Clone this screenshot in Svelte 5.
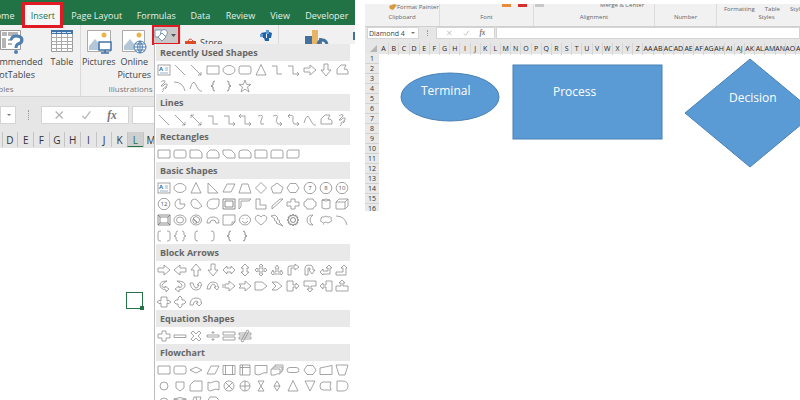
<script lang="ts">
  type Section = { title: string; shapes: string[] };

  const tabs = ["Home", "Insert", "Page Layout", "Formulas", "Data", "Review", "View", "Developer"];
  const letters = "ABCDEFGHIJKLMNOPQRSTUVWXYZ".split("");

  // Left sheet is scrolled to column C, right sheet runs A..Z, AA..AP
  const leftColumns = letters.slice(2);
  const rightColumns = [...letters, ...letters.slice(0, 16).map((l) => "A" + l)];
  const rows = Array.from({ length: 16 }, (_, i) => i + 1);

  // Outlines on a 16x16 box.
  const outlines: Record<string, string> = {
    line: "M3 3L13 13",
    arrow: "M3 3L13 13M13 10V13H10",
    "double arrow": "M3 3L13 13M13 10V13H10M3 6V3H6",
    rectangle: "M2 4H14V12H2Z",
    oval: "M2 8A6 4.5 0 0 1 14 8A6 4.5 0 0 1 2 8Z",
    "rounded rectangle": "M4 4H12Q14 4 14 6V10Q14 12 12 12H4Q2 12 2 10V6Q2 4 4 4Z",
    triangle: "M8 2.5L13 13H3Z",
    elbow: "M3 4H8V12H13",
    "elbow arrow": "M3 4H8V12H14M12 10L14 12L12 14",
    "elbow double arrow": "M2 4H8V12H14M12 10L14 12L12 14M4 2L2 4L4 6",
    "right arrow": "M2 6H8V3L14 8L8 13V10H2Z",
    "left arrow": "M14 6H8V3L2 8L8 13V10H14Z",
    "up arrow": "M6 14V8H3L8 2L13 8H10V14Z",
    "down arrow": "M6 2V8H3L8 14L13 8H10V2Z",
    freeform: "M3 7L7 3H12L10 7Q14 7 14 9V12H3Z",
    scribble: "M5 4Q9 1 9 4L5 8Q7 9 9 6Q12 5 11 8L7 11Q8 13 6 14M9 11L11 9",
    arc: "M2 4Q11 4 13 13",
    curve: "M2 11Q5 0 8 7T14 13",
    "left brace": "M10 3Q8 3 8 5V7L6 8L8 9V11Q8 13 10 13",
    "right brace": "M6 3Q8 3 8 5V7L10 8L8 9V11Q8 13 6 13",
    star: "M8 2L9.6 6.4H14L10.5 9L12 14L8 11L4 14L5.5 9L2 6.4H6.4Z",
    "curved connector": "M5 4Q11 2 9 6T8 12H11",
    "curved arrow": "M4 4Q10 2 8 6T9 12H13M11 10L13 12L11 14",
    "curved double arrow": "M3 4Q9 2 8 6T9 12H14M12 10L14 12L12 14M5 2L3 4L5 6",
    "snip corner": "M2 4H11L14 7V12H2Z",
    "snip same side": "M5 4H11L14 7V12H2V7Z",
    "snip diagonal": "M2 4H10L14 8V12H6L2 8Z",
    "snip and round": "M5 4H11L14 7V12H2V7Q2 4 5 4Z",
    "round corner": "M2 4H12Q14 4 14 6V12H2Z",
    "round same side": "M4 4H12Q14 4 14 6V12H2V6Q2 4 4 4Z",
    "round diagonal": "M4 4H14V10Q14 12 12 12H2V6Q2 4 4 4Z",
    "right triangle": "M3 3V13H13Z",
    parallelogram: "M6 4H14L10 12H2Z",
    trapezoid: "M5 4H11L14 13H2Z",
    diamond: "M8 2.5L13.5 8L8 13.5L2.5 8Z",
    pentagon: "M8 3L14 7.5L12 13H4L2 7.5Z",
    hexagon: "M5 3.5H11L14 8L11 12.5H5L2 8Z",
    pie: "M8 8V3A5 5 0 1 0 13 8Z",
    chord: "M4 4Q7 2 9 4L14 10Q11 14 6 12Q1 8 4 4Z",
    teardrop: "M14 3V8Q13 13 8 13Q2 13 2 8Q3 3 8 3Z",
    frame: "M2 3H14V13H2ZM4 5H12V11H4Z",
    "half frame": "M2 3H14L12 5H4V11L2 13Z",
    "l shape": "M3 3H7V9H13V13H3Z",
    "diagonal stripe": "M3 10L11 3H14L3 13Z",
    plus: "M6 3H10V6H14V10H10V13H6V10H2V6H6Z",
    plaque: "M5 3H11Q11 5 14 6V10Q11 11 11 13H5Q5 11 2 10V6Q5 5 5 3Z",
    can: "M4 4Q8 2 12 4V12Q8 14 4 12ZM4 4Q8 6 12 4",
    cube: "M2 6L5 3H14V10L11 13H2ZM2 6H11V13M11 6L14 3",
    bevel: "M2 3H14V13H2ZM4 5H12V11H4ZM2 3L4 5M14 3L12 5M2 13L4 11M14 13L12 11",
    donut: "M2 8A6 5 0 0 1 14 8A6 5 0 0 1 2 8ZM4.5 8A3.5 3 0 0 1 11.5 8A3.5 3 0 0 1 4.5 8Z",
    "no symbol": "M2.5 8A5.5 5 0 0 1 13.5 8A5.5 5 0 0 1 2.5 8ZM5 6L10 11Q13 8 11 6Q8 3 5 6ZM5 7L9 11Q6 12 5 10Z",
    "block arc": "M2 11Q2 5 8 5T14 11H11Q11 8 8 8T5 11Z",
    "folded corner": "M2 3H14V10L11 13H2ZM11 13V10H14",
    smiley: "M2.5 8A5.5 5 0 0 1 13.5 8A5.5 5 0 0 1 2.5 8ZM5 9Q8 13 11 9M6 6V7M10 6V7",
    heart: "M8 13Q1 8 2.5 5Q5 1.5 8 5Q11 1.5 13.5 5Q15 8 8 13Z",
    lightning: "M2 4L6 3L9 6L8 7L11 9L10 10L14 14L7 11L8 10L5 8L6 7Z",
    sun: "M5 5L5 3L7 4L8 2L9 4L11 3L11 5L13 5L12 7L14 8L12 9L13 11L11 11L11 13L9 12L8 14L7 12L5 13L5 11L3 11L4 9L2 8L4 7L3 5ZM8 5.5A2.5 2.5 0 1 0 8 10.5A2.5 2.5 0 1 0 8 5.5",
    moon: "M11 3Q5 3 5 8T11 13Q8 11 8 8T11 3Z",
    cloud: "M4 10Q1 9 3 7Q3 4 6 5Q8 3 10 5Q14 4 13 7Q15 9 12 10Q10 12 8 10Q5 12 4 10ZM6 12H5",
    "double bracket": "M5 3H4Q2 3 2 5V11Q2 13 4 13H5M11 3H12Q14 3 14 5V11Q14 13 12 13H11",
    "double brace": "M6 3Q4 3 4 5V7L2 8L4 9V11Q4 13 6 13M10 3Q12 3 12 5V7L14 8L12 9V11Q12 13 10 13",
    "left bracket": "M10 3Q7 3 7 5V11Q7 13 10 13",
    "right bracket": "M6 3Q9 3 9 5V11Q9 13 6 13",
    "left-right arrow": "M2 8L6 4V6H10V4L14 8L10 12V10H6V12Z",
    "up-down arrow": "M8 2L12 6H10V10H12L8 14L4 10H6V6H4Z",
    "quad arrow": "M8 2L10 4H9V7H12V6L14 8L12 10V9H9V12H10L8 14L6 12H7V9H4V10L2 8L4 6V7H7V4H6Z",
    "three-way arrow": "M8 3L10 6H9V10H12V8L14 11L12 13V12H4V13L2 11L4 8V10H7V6H6Z",
    "bent arrow": "M3 13V6Q3 4 5 4H10V2L14 5L10 8V6H6V13Z",
    "u-turn arrow": "M3 13V6Q3 3 7 3Q11 3 11 6V8H13L10 12L7 8H8V6H6V13Z",
    "left-up arrow": "M2 10L5 7V9H10V6H8L11 3L14 6H12V12H5V13Z",
    "bent-up arrow": "M2 10H9V6H7L10 3L13 6H12V13H2Z",
    "curved right": "M11 3Q4 3 4 7T10 12V14L13 11L9 8V10Q5 9 6 7T11 3Z",
    "curved left": "M5 3Q13 3 13 7T7 12V14L3 11L7 8V10Q11 9 10 7T5 3Z",
    "curved up": "M2 5Q3 12 8 12T13 7H14L12 4L9 7H11Q10 10 8 10T5 5Z",
    "curved down": "M2 11Q3 4 8 4T13 9H14L12 12L9 9H11Q10 6 8 6T5 11Z",
    "striped arrow": "M2 6V10M4 6H8V3L14 8L8 13V10H4Z",
    "notched arrow": "M2 6H8V3L14 8L8 13V10H2L4 8Z",
    "pentagon arrow": "M2 4H9L14 8L9 12H2Z",
    chevron: "M3 4H8L13 8L8 12H3L7 8Z",
    "right callout": "M2 3H8V7H11V5L14 8L11 11V9H8V13H2Z",
    "down callout": "M2 3H14V8H9V11H11L8 14L5 11H7V8H2Z",
    "left callout": "M14 3H8V7H5V5L2 8L5 11V9H8V13H14Z",
    "up callout": "M2 13H14V8H9V5H11L8 2L5 5H7V8H2Z",
    "left-right callout": "M5 3H11V7H12V6L15 8L12 10V9H11V13H5V9H4V10L1 8L4 6V7H5Z",
    "quad callout": "M8 2L10 4V6H12L14 8L12 10H10V12L8 14L6 12V10H4L2 8L4 6H6V4Z",
    "circular arrow": "M2 11Q2 4 8 4T13 9H14L11 12L8 9H10Q10 7 8 7T5 11Z",
    minus: "M2 7H14V9.5H2Z",
    multiply: "M5 3L8 6L11 3L13 5L10 8L13 11L11 13L8 10L5 13L3 11L6 8L3 5Z",
    divide: "M2 7H14V9H2ZM7 4H9V5H7ZM7 11H9V12H7Z",
    equal: "M2 4H14V7H2ZM2 9H14V12H2Z",
    "not equal": "M2 5H14V7H2ZM2 9H14V11H2ZM10 2L12 3L6 14L4 13Z",
    "flat diamond": "M8 5L14 8L8 11L2 8Z",
    predefined: "M2 3.5H14V12.5H2ZM4.5 3.5V12.5M11.5 3.5V12.5",
    "internal storage": "M3 3H13V13H3ZM3 5.5H13M5.5 3V13",
    document: "M2 3.5H14V11Q11 10 8 12T2 12Z",
    multidocument: "M2 7H11V12Q8 11 6 13H2ZM4 7V5H13V10H11M6 5V3H14V8H13",
    terminator: "M5 5.5H11Q14 5.5 14 8T11 10.5H5Q2 10.5 2 8T5 5.5Z",
    "manual input": "M2 6L14 3.5V12.5H2Z",
    "manual operation": "M2 3H14L11 13H5Z",
    connector: "M8 4A4 4 0 1 0 8 12A4 4 0 1 0 8 4Z",
    "off-page": "M4 4H12V10L8 13L4 10Z",
    card: "M2 7L6 3H14V13H2Z",
    tape: "M3 4Q5 6 8 4T14 4V12Q11 10 8 12T3 12Z",
    "summing junction": "M8 3A5 5 0 1 0 8 13A5 5 0 1 0 8 3M4.5 4.5L11.5 11.5M11.5 4.5L4.5 11.5",
    or: "M8 3A5 5 0 1 0 8 13A5 5 0 1 0 8 3M8 3V13M3 8H13",
    collate: "M5 3H11L5 13H11Z",
    sort: "M8 3L11 8L8 13L5 8ZM5 8H11",
    merge: "M3 3H13L8 13Z",
    "stored data": "M5 4H13Q11 8 13 12H5Q2 12 2 8T5 4Z",
    delay: "M3 3H8Q14 3 14 8T8 13H3Z",
    disk: "M2 5Q8 2 14 5V11Q8 14 2 11ZM2 5Q8 8 14 5",
    "direct access": "M6 3H13L10 13H3ZM8 3L10 13",
    display: "M2 8L5 3H11Q14 5 14 8T11 13H5Z",
  };

  // Heavier grey for the solid-looking glyphs.
  const dark = ["left brace", "right brace", "frame", "bevel", "sun"];
  const numbered: Record<string, string> = { heptagon: "7", octagon: "8", decagon: "10", dodecagon: "12" };

  const sections: Section[] = [
    {
      title: "Recently Used Shapes",
      shapes: [
        "text box", "line", "arrow", "rectangle", "oval", "rounded rectangle", "triangle", "elbow", "elbow arrow", "right arrow", "down arrow", "freeform",
        "scribble", "arc", "curve", "left brace", "right brace", "star",
      ],
    },
    {
      title: "Lines",
      shapes: ["line", "arrow", "double arrow", "elbow", "elbow arrow", "elbow double arrow", "curved connector", "curved arrow", "curved double arrow", "curve", "freeform", "scribble"],
    },
    {
      title: "Rectangles",
      shapes: ["rectangle", "rounded rectangle", "snip corner", "snip same side", "snip diagonal", "snip and round", "round corner", "round same side", "round diagonal"],
    },
    {
      title: "Basic Shapes",
      shapes: [
        "text box", "oval", "triangle", "right triangle", "parallelogram", "trapezoid", "diamond", "pentagon", "hexagon", "heptagon", "octagon", "decagon",
        "dodecagon", "pie", "chord", "teardrop", "frame", "half frame", "l shape", "diagonal stripe", "plus", "plaque", "can", "cube",
        "bevel", "donut", "no symbol", "block arc", "folded corner", "smiley", "heart", "lightning", "sun", "moon", "cloud", "arc",
        "double bracket", "double brace", "left bracket", "right bracket", "left brace", "right brace",
      ],
    },
    {
      title: "Block Arrows",
      shapes: [
        "right arrow", "left arrow", "up arrow", "down arrow", "left-right arrow", "up-down arrow", "quad arrow", "three-way arrow", "bent arrow", "u-turn arrow", "left-up arrow", "bent-up arrow",
        "curved right", "curved left", "curved up", "curved down", "striped arrow", "notched arrow", "pentagon arrow", "chevron", "right callout", "down callout", "left callout", "up callout",
        "left-right callout", "quad callout", "circular arrow",
      ],
    },
    { title: "Equation Shapes", shapes: ["plus", "minus", "multiply", "divide", "equal", "not equal"] },
    {
      title: "Flowchart",
      shapes: [
        "rectangle", "rounded rectangle", "flat diamond", "parallelogram", "predefined", "internal storage", "document", "multidocument", "terminator", "hexagon", "manual input", "manual operation",
        "connector", "off-page", "card", "tape", "summing junction", "or", "collate", "sort", "triangle", "merge", "stored data", "delay",
        "connector", "disk", "direct access", "display",
      ],
    },
  ];
</script>

{#snippet shapeIcon(name: string)}
  <svg class="shape" class:dark={dark.includes(name)} viewBox="0 0 16 16" aria-hidden="true">
    {#if name === "text box"}
      <rect x="2" y="3" width="12" height="10" />
      <text class="box-letter" x="3" y="9">A</text>
      <path class="blue" d="M9 6H12M9 8H12M4 11H12" />
    {:else if numbered[name]}
      <path d="M6 2.5H10L13 5L14 8L13 11L10 13.5H6L3 11L2 8L3 5Z" />
      <text class="sides" x="8" y="10">{numbered[name]}</text>
    {:else}
      <path d={outlines[name]} />
    {/if}
  </svg>
{/snippet}

{#snippet formulaMarks()}
  <svg viewBox="0 0 88 18" aria-hidden="true">
    <path class="mark" d="M11 5L19 13M19 5L11 13M41 10L44 13L50 5" />
    <text class="fx" x="69" y="13">fx</text>
  </svg>
{/snippet}

<main class="page">
  <section class="pane insert">
    <nav class="tabs">
      {#each tabs as tab (tab)}
        <button class="tab" class:active={tab === "Insert"}>{tab}</button>
      {/each}
    </nav>

    <div class="ribbon">
      <div class="group tables">
        <div class="tools">
          <button class="tool">
            <svg class="big" viewBox="0 0 26 26" aria-hidden="true">
              <path fill="#fff" stroke="#999" d="M2.5 2.5H22.5V21.5H2.5Z" />
              <path fill="#b5b5b5" d="M4 4H9V8H4ZM10 4H20V8H10ZM4 10H8V20H4ZM10 11H14V13H10ZM10 15H14V17H10Z" />
              <path fill="none" stroke="#4f7fb0" stroke-width="3" d="M13 12Q14 8 18 8Q24 8 24 12Q24 15 20 16Q18 17 18 20" />
              <circle cx="18" cy="24" r="2" fill="#4f7fb0" />
            </svg>
            <span>Recommended PivotTables</span>
          </button>
          <button class="tool narrow">
            <svg class="big" viewBox="0 0 26 26" aria-hidden="true">
              <path fill="#fff" stroke="#999" d="M2.5 2.5H23.5V23.5H2.5Z" />
              <path fill="#3f73a8" d="M2 2H24V6H2Z" />
              <path stroke="#aaa" d="M2 9.5H24M2 13.5H24M2 16.5H24M2 20.5H24M7.5 6V24M12.5 6V24M18.5 6V24" />
              <path stroke="#d8e4f0" d="M3 4.5H23" stroke-dasharray="4 1" />
            </svg>
            <span>Table</span>
          </button>
        </div>
        <div class="caption">Tables</div>
      </div>

      <div class="group illustrations">
        <div class="tools">
          <button class="tool medium">
            <svg class="big" viewBox="0 0 26 26" aria-hidden="true">
              <path fill="#fff" stroke="#aaa" d="M1.5 2.5H24.5V23.5H1.5Z" />
              <circle cx="18" cy="7" r="2.5" fill="#e9b44c" />
              <path fill="#b4c7d8" d="M3 22V18L9 11L14 17V22Z" />
              <path fill="#fff" stroke="#3f73a8" stroke-width="1.5" d="M13 14H25V22H13ZM19 22V25M15 25H23" />
            </svg>
            <span>Pictures</span>
          </button>
          <button class="tool medium">
            <svg class="big" viewBox="0 0 26 26" aria-hidden="true">
              <path fill="#fff" stroke="#aaa" d="M1.5 2.5H23.5V23.5H1.5Z" />
              <circle cx="18" cy="7" r="2.5" fill="#e9b44c" />
              <path fill="#b4c7d8" d="M3 22V18L9 11L14 17V22Z" />
              <circle cx="19" cy="19" r="6" fill="#fff" stroke="#4f7fb0" />
              <path fill="none" stroke="#4f7fb0" d="M13 19H25M19 13V25M19 13Q14 19 19 25Q24 19 19 13M14 16H24M14 22H24" />
            </svg>
            <span>Online Pictures</span>
          </button>
          <button class="shapes-button" aria-label="Shapes">
            <svg viewBox="0 0 24 14" aria-hidden="true">
              <path fill="#fff" stroke="#7b97b3" d="M1 2H8V9H1Z" />
              <circle cx="10" cy="5" r="3.5" fill="#fff" stroke="#7b97b3" />
              <path fill="#fff" stroke="#7b97b3" d="M8 5L12 9L8 13L4 9Z" />
              <path fill="#555" d="M17 6H22L19.5 9Z" />
            </svg>
          </button>
        </div>
        <div class="caption">Illustrations</div>
      </div>

      <div class="group addins">
        <button class="store">
          <svg viewBox="0 0 12 10" aria-hidden="true">
            <path fill="#dc4a26" d="M0 3H11V10H0Z" />
            <path fill="none" stroke="#dc4a26" d="M3 3Q5 -1 8 3" />
          </svg>
          Store
        </button>
        <svg class="people" viewBox="0 0 14 12" aria-hidden="true">
          <path fill="#1f62a8" d="M1 3L6 2V8L3 8ZM7 1L12 3L11 8H7ZM4 8H9V11H5Z" />
          <path fill="#5d9bd2" d="M6 0H9V4H6ZM0 4H3V7H0Z" />
        </svg>
      </div>
      <div class="group charts">
        <svg viewBox="0 0 52 14" aria-hidden="true">
          <path fill="#41719c" d="M0 6H7V14H0Z" />
          <path fill="#e6b566" d="M7 0H13V14H7Z" />
          <path fill="#6c7f91" d="M14 8H17V14H14Z" />
          <path fill="none" stroke="#41719c" stroke-width="3" d="M13 14A5 7 0 0 1 22 14" />
          <path fill="#41719c" d="M48 2H52V10H48Z" />
        </svg>
      </div>
    </div>

    <div class="formula-row">
      <button class="name-drop" aria-label="Name box list">
        <svg viewBox="0 0 6 4" aria-hidden="true"><path fill="#777" d="M1 1H5L3 3Z" /></svg>
      </button>
      <span class="grip"></span>
      <div class="marks">{@render formulaMarks()}</div>
      <input class="formula" aria-label="Formula" />
    </div>

    <div class="columns">
      {#each leftColumns as col (col)}
        <span class:selected={col === "L"}>{col}</span>
      {/each}
    </div>
    <div class="cells"><i class="cursor"></i></div>

    <div class="menu">
      {#each sections as section (section.title)}
        <h2>{section.title}</h2>
        <div class="shapes">
          {#each section.shapes as name}
            <button aria-label={name}>{@render shapeIcon(name)}</button>
          {/each}
        </div>
      {/each}
    </div>
  </section>

  <section class="pane sheet">
    <div class="strip">
      <div class="strip-group">
        <div class="cut">
          <svg class="brush" viewBox="0 0 8 6" aria-hidden="true"><path fill="#d99a3d" d="M0 2L5 0L8 1L4 6L1 5Z" /></svg>
          Format Painter
        </div>
        <span>Clipboard</span>
      </div>
      <div class="strip-group">
        <div class="cut swatches"><i class="orange"></i><i class="red"></i></div>
        <span>Font</span>
      </div>
      <div class="strip-group">
        <div class="cut merge"><i class="grey"></i>Merge &amp; Center</div>
        <span>Alignment</span>
      </div>
      <div class="strip-group">
        <div class="cut"></div>
        <span>Number</span>
      </div>
      <div class="strip-group">
        <div class="cut styles"><b>Formatting</b><b>Table</b><b>Styles</b></div>
        <span>Styles</span>
      </div>
    </div>

    <div class="formula-row small">
      <label class="name-box">
        <input aria-label="Name box" value="Diamond 4" />
        <svg viewBox="0 0 6 4" aria-hidden="true"><path fill="#777" d="M1 1H5L3 3Z" /></svg>
      </label>
      <span class="grip"></span>
      <div class="marks">{@render formulaMarks()}</div>
      <input class="formula" aria-label="Formula" />
    </div>

    <div class="sheet-head">
      <svg class="corner" viewBox="0 0 14 11" aria-hidden="true"><path fill="#b5b5b5" d="M12 2V9H5Z" /></svg>
      <div class="sheet-columns">
        {#each rightColumns as col (col)}
          <span>{col}</span>
        {/each}
      </div>
    </div>
    <div class="sheet-body">
      <div class="row-numbers">
        {#each rows as row (row)}
          <span>{row}</span>
        {/each}
      </div>
      <svg class="canvas" aria-label="Flowchart symbols">
        <ellipse cx="71" cy="43" rx="49" ry="24" />
        <rect x="134" y="11" width="149" height="74" />
        <path d="M371 5L436 59L371 113L306 59Z" />
        <text x="42" y="41">Terminal</text>
        <text x="174" y="42">Process</text>
        <text x="350" y="48">Decision</text>
      </svg>
    </div>
  </section>
</main>

<style>
  :global(body) {
    margin: 0;
    background: #fff;
  }
  .page {
    display: grid;
    grid-template-columns: 71fr 87fr;
    column-gap: 10px;
    height: 100vh;
    overflow: hidden;
    font-family: "Open Sans", "Noto Sans", sans-serif;
    font-size: 9px;
    color: #444;
  }
  button,
  input {
    font: inherit;
    color: inherit;
    border: 0;
    padding: 0;
    margin: 0;
    background: none;
    min-width: 0;
  }
  svg {
    display: block;
  }
  .pane {
    position: relative;
    min-width: 0;
    overflow: hidden;
  }
  .insert {
    display: flex;
    flex-direction: column;
  }

  /* tabs */
  .tabs {
    display: flex;
    height: 25px;
    padding-top: 6px;
    margin-left: -19px;
    box-sizing: border-box;
    background: #217346;
    flex: none;
  }
  .tab {
    padding: 0 8px;
    color: #e4f0e8;
    white-space: nowrap;
  }
  .tab.active {
    position: relative;
    z-index: 1;
    height: 26px;
    margin-top: -4px;
    padding: 0 6px;
    box-sizing: border-box;
    border: 3px solid #e01b24;
    background: #f6f6f6;
    color: #217346;
  }

  /* ribbon */
  .ribbon {
    display: flex;
    height: 72px;
    margin-left: -77px;
    background: #f1f1f1;
    border-bottom: 1px solid #d5d5d5;
    box-sizing: border-box;
    flex: none;
  }
  .group {
    display: flex;
    flex-direction: column;
    justify-content: space-between;
    box-sizing: border-box;
    border-right: 1px solid #dadada;
    flex: none;
  }
  .tables {
    width: 158px;
  }
  .illustrations {
    width: 100px;
  }
  .tools {
    display: flex;
    align-items: flex-start;
  }
  .tables .tools {
    justify-content: flex-end;
  }
  .tool {
    display: flex;
    flex-direction: column;
    align-items: center;
    width: 66px;
    padding-top: 3px;
    line-height: 13px;
  }
  .tool.narrow {
    width: 36px;
  }
  .tool.medium {
    width: 37px;
  }
  .big {
    width: 26px;
    height: 26px;
    margin-bottom: 1px;
  }
  .caption {
    text-align: center;
    font-size: 8px;
    line-height: 14px;
    color: #777;
  }
  .shapes-button {
    width: 28px;
    height: 20px;
    box-sizing: border-box;
    border: 2px solid #e01b24;
    background: #c8c8c8;
    flex: none;
  }
  .addins {
    width: 98px;
    flex-direction: row;
    align-items: flex-start;
    padding: 5px 4px;
  }
  .store {
    display: flex;
    align-items: center;
    gap: 3px;
    padding-top: 6px;
  }
  .store svg {
    width: 12px;
    height: 10px;
  }
  .people {
    width: 14px;
    height: 12px;
  }
  .charts {
    padding: 5px 0 0 26px;
    border: 0;
  }
  .charts svg {
    width: 52px;
    height: 14px;
  }

  /* formula bar */
  .formula-row {
    display: flex;
    align-items: center;
    height: 35px;
    background: #e6e6e6;
    flex: none;
  }
  .name-drop {
    width: 16px;
    height: 18px;
    background: #fff;
    border: 1px solid #d4d4d4;
    box-sizing: border-box;
  }
  .name-drop svg,
  .name-box svg {
    width: 6px;
    height: 4px;
    margin-left: auto;
  }
  .name-drop svg {
    margin-right: 3px;
  }
  .grip {
    height: 10px;
    margin: 0 12px;
    border-left: 1px dotted #999;
  }
  .marks {
    width: 88px;
    height: 18px;
    background: #fff;
    border: 1px solid #d4d4d4;
    box-sizing: border-box;
    margin-right: 3px;
  }
  .marks svg {
    width: 100%;
    height: 100%;
  }
  .mark {
    fill: none;
    stroke: #b5b5b5;
    stroke-width: 1.5;
  }
  .fx {
    font: italic bold 13px "Liberation Serif", serif;
    fill: #777;
  }
  .formula {
    flex: 1;
    height: 18px;
    background: #fff;
    border: 1px solid #d4d4d4;
    box-sizing: border-box;
  }

  /* left sheet */
  .columns {
    display: grid;
    grid-template-columns: repeat(24, 1fr);
    margin: 0 -7px 0 -14px;
    padding-bottom: 1px;
    background: #e6e6e6;
    flex: none;
  }
  .columns span {
    height: 15px;
    line-height: 17px;
    text-align: center;
    font-size: 10px;
    color: #333;
    border-left: 1px solid #c4c4c4;
    box-sizing: border-box;
  }
  .columns .selected {
    background: #cfcfcf;
    color: #217346;
    border-bottom: 1px solid #217346;
  }
  .cells {
    position: relative;
    flex: 1;
  }
  .cursor {
    position: absolute;
    left: 126px;
    top: 144px;
    width: 15px;
    height: 15px;
    border: 1px solid #217346;
  }
  .cursor::after {
    content: "";
    position: absolute;
    right: -2px;
    bottom: -2px;
    width: 4px;
    height: 4px;
    background: #217346;
  }

  /* shapes menu */
  .menu {
    position: absolute;
    left: 154px;
    right: 0;
    top: 44px;
    bottom: 0;
    overflow: hidden;
    padding-right: 5px;
    border-left: 1px solid #bdbdbd;
    background: #fff;
  }
  .menu h2 {
    height: 17px;
    margin: 0 0 1px 1px;
    padding-left: 4px;
    font-size: 9px;
    line-height: 18px;
    font-weight: 700;
    color: #666;
    background: #e9e9e9;
  }
  .shapes {
    display: grid;
    grid-template-columns: repeat(12, 1fr);
    grid-auto-rows: 16px;
    padding-left: 1px;
  }
  .shapes button {
    display: flex;
    justify-content: center;
  }
  .shape {
    width: 16px;
    height: 16px;
    fill: none;
    stroke: #8e8e8e;
    stroke-width: 0.8;
  }
  .shape.dark {
    stroke: #6f6f6f;
  }
  .shape .blue {
    stroke: #7d9cbb;
  }
  .shape text {
    stroke: none;
    fill: #555;
  }
  .shape .box-letter {
    font-size: 6px;
    font-weight: 700;
    fill: #3b6ea5;
  }
  .shape .sides {
    font-size: 6px;
    text-anchor: middle;
  }

  /* right pane */
  .sheet {
    padding-top: 4px;
  }
  .strip {
    display: grid;
    grid-template-columns: 75fr 94fr 121fr 62fr 100fr;
    margin-right: -17px;
    height: 23px;
    background: #f1f1f1;
    border-bottom: 1px solid #d0d0d0;
    box-sizing: border-box;
    font-size: 6px;
    color: #666;
  }
  .strip-group {
    display: flex;
    flex-direction: column;
    border-right: 1px solid #dcdcdc;
    text-align: center;
    line-height: 9px;
  }
  .cut {
    display: flex;
    height: 9px;
    padding-left: 24px;
    overflow: hidden;
    line-height: 6px;
    white-space: nowrap;
  }
  .brush {
    width: 8px;
    height: 6px;
  }
  .swatches {
    padding-left: 62px;
    gap: 7px;
  }
  .cut i {
    width: 9px;
    height: 3px;
  }
  .orange {
    background: #e88b3c;
  }
  .red {
    background: #d9302c;
  }
  .grey {
    margin-right: 56px;
    background: #c8c8c8;
  }
  .merge {
    padding-left: 1px;
    line-height: 2px;
  }
  .styles {
    padding-left: 7px;
    gap: 10px;
    line-height: 10px;
  }
  .styles b {
    font-weight: 400;
  }
  .small {
    height: 16px;
    padding-left: 2px;
    padding-bottom: 4px;
    box-sizing: border-box;
  }
  .small .grip {
    height: 6px;
    margin: 0 8px;
  }
  .small .marks {
    width: 59px;
    height: 12px;
    margin-right: 1px;
  }
  .small .formula {
    height: 12px;
  }
  .name-box {
    display: flex;
    align-items: center;
    width: 52px;
    height: 12px;
    padding-right: 2px;
    box-sizing: border-box;
    background: #fff;
    border: 1px solid #d4d4d4;
  }
  .name-box input {
    width: 40px;
    height: 10px;
    font-size: 7px;
    padding-left: 1px;
  }
  .sheet-head {
    display: flex;
    height: 11px;
    background: #e6e6e6;
  }
  .corner {
    width: 14px;
    height: 11px;
    flex: none;
  }
  .sheet-columns {
    display: grid;
    grid-template-columns: repeat(42, 1fr);
    flex: 1;
    margin-right: -6px;
  }
  .sheet-columns span {
    min-width: 0;
    font-size: 7px;
    line-height: 12px;
    display: flex;
    justify-content: center;
    color: #222;
    border-right: 1px solid #d6d6d6;
  }
  .sheet-body {
    display: flex;
  }
  .row-numbers {
    display: grid;
    grid-auto-rows: 10px;
    width: 14px;
    height: 157px;
    overflow: hidden;
    background: #e9e9e9;
    font-size: 7px;
    line-height: 10px;
    text-align: center;
    color: #333;
    flex: none;
  }
  .row-numbers span {
    box-sizing: border-box;
    border-bottom: 1px solid #d2d2d2;
  }
  .canvas {
    flex: 1;
    min-width: 0;
    height: 157px;
    fill: #5b9bd5;
    stroke: #4a80b4;
  }
  .canvas text {
    fill: #fff;
    stroke: none;
    font-size: 12px;
  }
</style>
